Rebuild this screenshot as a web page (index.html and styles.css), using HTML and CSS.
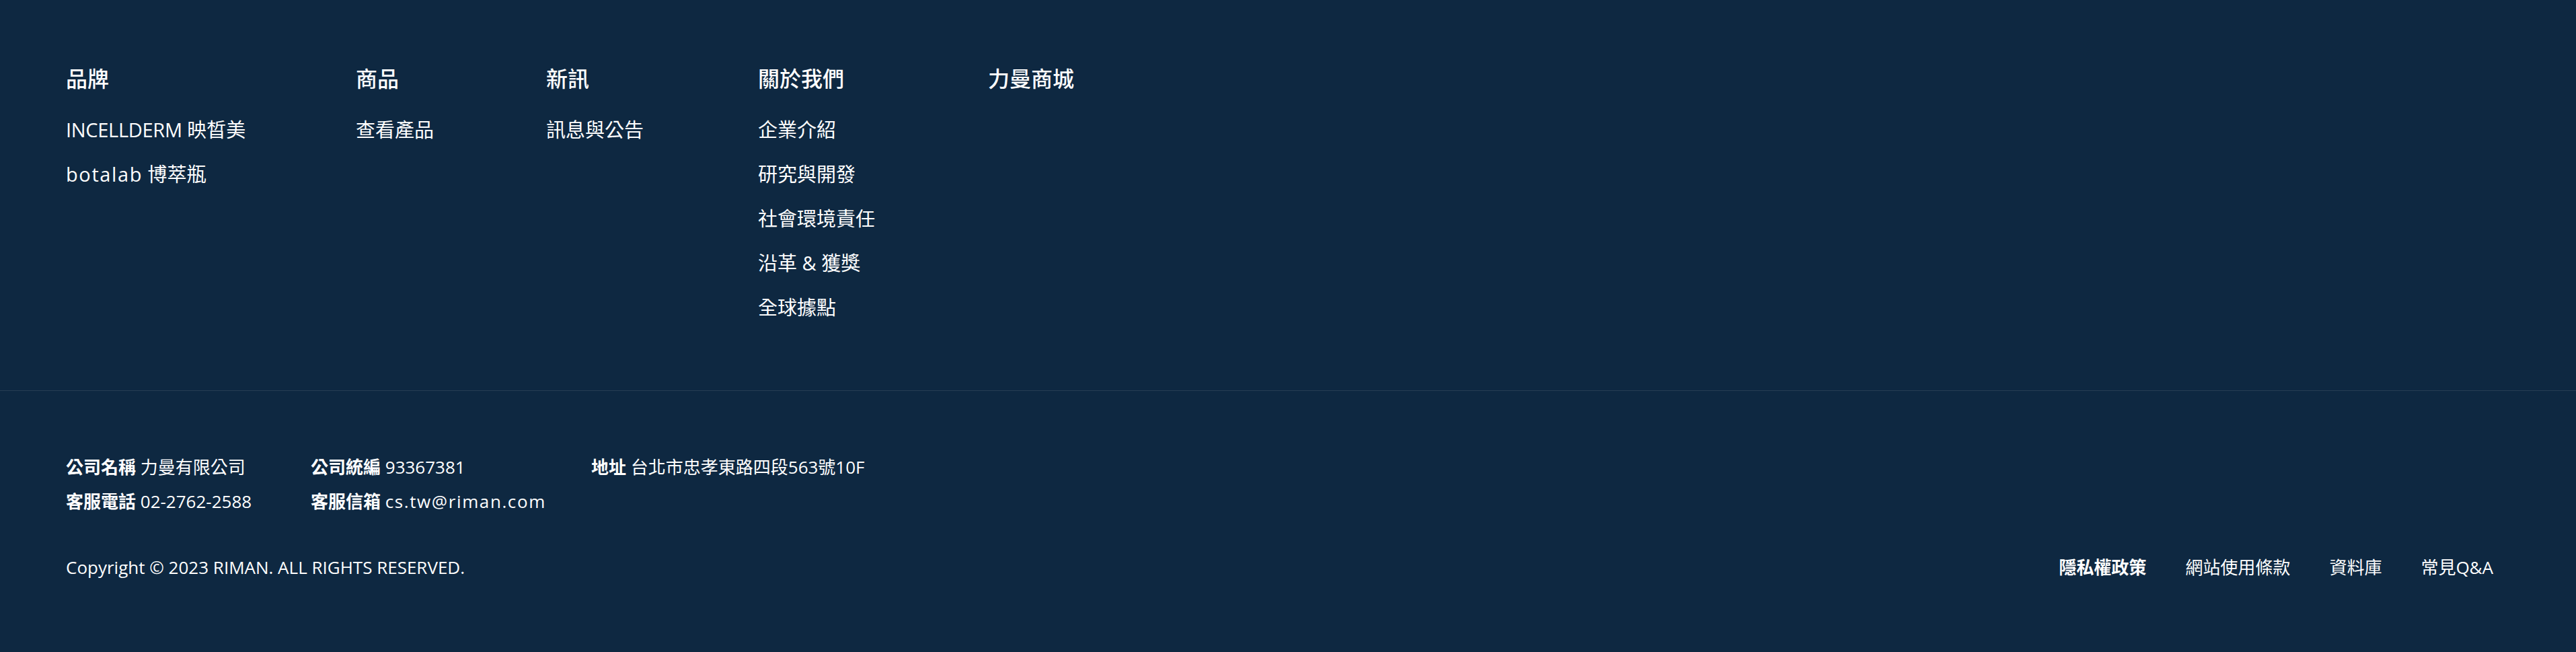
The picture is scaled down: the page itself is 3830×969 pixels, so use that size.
FILE: index.html
```html
<!DOCTYPE html>
<html lang="zh-Hant">
<head>
<meta charset="utf-8">
<title>RIMAN Footer</title>
<link rel="stylesheet" href="styles.css">
</head>
<body>
<footer class="footer">
  <nav class="sitemap">
    <div class="col">
      <h3 class="col-title">品牌</h3>
      <ul class="col-list">
        <li><a href="#"><span class="latin-caps">INCELLDERM</span> 映晳美</a></li>
        <li><a href="#"><span class="latin-wide">botalab</span> 博萃瓶</a></li>
      </ul>
    </div>
    <div class="col">
      <h3 class="col-title">商品</h3>
      <ul class="col-list">
        <li><a href="#">查看產品</a></li>
      </ul>
    </div>
    <div class="col">
      <h3 class="col-title">新訊</h3>
      <ul class="col-list">
        <li><a href="#">訊息與公告</a></li>
      </ul>
    </div>
    <div class="col">
      <h3 class="col-title">關於我們</h3>
      <ul class="col-list">
        <li><a href="#">企業介紹</a></li>
        <li><a href="#">研究與開發</a></li>
        <li><a href="#">社會環境責任</a></li>
        <li><a href="#">沿革 &amp; 獲獎</a></li>
        <li><a href="#">全球據點</a></li>
      </ul>
    </div>
    <div class="col">
      <h3 class="col-title">力曼商城</h3>
    </div>
  </nav>
  <div class="bottom">
    <div class="info">
      <div class="info-item"><b>公司名稱</b> 力曼有限公司</div>
      <div class="info-item"><b>公司統編</b> 93367381</div>
      <div class="info-item"><b>地址</b> 台北市忠孝東路四段563號10F</div>
      <div class="info-item"><b>客服電話</b> 02-2762-2588</div>
      <div class="info-item"><b>客服信箱</b> <span class="latin-wide">cs.tw@riman.com</span></div>
    </div>
    <div class="legal">
      <p class="copyright">Copyright © 2023 RIMAN. ALL RIGHTS RESERVED.</p>
      <ul class="links">
        <li><a href="#" class="strong">隱私權政策</a></li>
        <li><a href="#">網站使用條款</a></li>
        <li><a href="#">資料庫</a></li>
        <li><a href="#">常見Q&amp;A</a></li>
      </ul>
    </div>
  </div>
</footer>
</body>
</html>
```

FILE: styles.css
```css
html, body {
  margin: 0;
  padding: 0;
  background: #0e2841;
}
body {
  font-family: "Open Sans", "Noto Sans CJK TC", sans-serif;
  color: #ffffff;
  min-height: 969px;
}
a {
  color: inherit;
  text-decoration: none;
}
ul {
  list-style: none;
  margin: 0;
  padding: 0;
}
.footer {
  background: #0e2841;
}
.sitemap {
  display: grid;
  grid-template-columns: 431px 283px 315px 342px auto;
  padding: 93px 123px 101px 98px;
  border-bottom: 1px solid rgba(255, 255, 255, 0.1);
}
.col-title {
  margin: 0;
  font-size: 32px;
  line-height: 48px;
  font-weight: 500;
}
.col-list {
  margin-top: 30px;
  display: flex;
  flex-direction: column;
  row-gap: 22px;
}
.col-list li {
  font-size: 29px;
  line-height: 44px;
}
.latin-caps {
  letter-spacing: -0.3px;
}
.latin-wide {
  letter-spacing: 1.6px;
}
.bottom {
  padding: 88px 123px 98px 98px;
}
.info {
  display: grid;
  grid-template-columns: 364px 417px auto;
  font-size: 26px;
  line-height: 51px;
}
.info-item b {
  font-weight: 700;
}
.legal {
  margin-top: 53px;
  display: flex;
  justify-content: space-between;
  align-items: center;
  font-size: 26px;
  line-height: 39px;
}
.copyright {
  margin: 0;
}
.links {
  display: flex;
  column-gap: 58px;
}
.links .strong {
  font-weight: 700;
}
```
